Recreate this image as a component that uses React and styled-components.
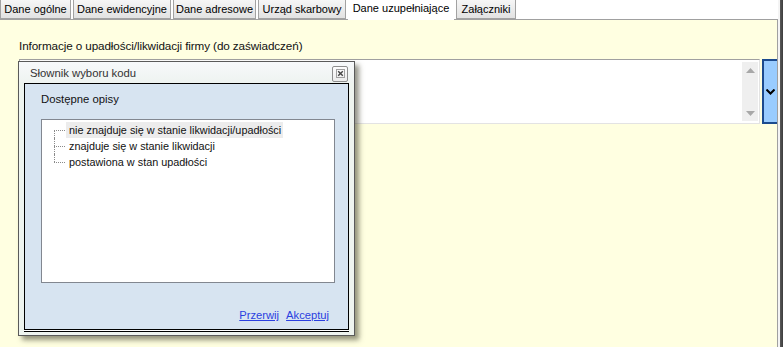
import React from "react"
import styled, { createGlobalStyle } from "styled-components"

const Global = createGlobalStyle`
  html, body {
    margin: 0;
    padding: 0;
    background: #f0f0f0;
  }
  body {
    font-family: "Liberation Sans", Arial, sans-serif;
    font-size: 11px;
    color: #000;
  }
`

const tabs = [
  { label: "Dane ogólne", w: 71 },
  { label: "Dane ewidencyjne", w: 98 },
  { label: "Dane adresowe", w: 83 },
  { label: "Urząd skarbowy", w: 88 },
  { label: "Dane uzupełniające", w: 106, active: true },
  { label: "Załączniki", w: 60 },
]

const options = [
  "nie znajduje się w stanie likwidacji/upadłości",
  "znajduje się w stanie likwidacji",
  "postawiona w stan upadłości",
]

export default function App() {
  return (
    <>
      <Global />
      <Window>
        <Main>
          <TabBar>
            {tabs.map((t) => (
              <Tab key={t.label} $w={t.w} $active={t.active}>
                {t.label}
              </Tab>
            ))}
          </TabBar>
          <Content>
            <FieldLabel>Informacje o upadłości/likwidacji firmy (do zaświadczeń)</FieldLabel>
            <FieldRow>
              <Memo>
                <MemoText />
                <ScrollBar>
                  <ScrollArrow>
                    <svg width="9" height="5" viewBox="0 0 9 5">
                      <path d="M0 5 L4.5 0 L9 5 Z" fill="#a8a8a8" />
                    </svg>
                  </ScrollArrow>
                  <ScrollArrow>
                    <svg width="9" height="5" viewBox="0 0 9 5">
                      <path d="M0 0 L9 0 L4.5 5 Z" fill="#a8a8a8" />
                    </svg>
                  </ScrollArrow>
                </ScrollBar>
              </Memo>
              <DropButton>
                <svg width="9" height="6" viewBox="0 0 9 6">
                  <path d="M0.5 0.5 L4.5 4.5 L8.5 0.5" stroke="#000" strokeWidth="2" fill="none" />
                </svg>
              </DropButton>
            </FieldRow>
          </Content>
        </Main>
        <RightEdge />

        <Dialog>
          <DialogTitle>
            <span>Słownik wyboru kodu</span>
            <CloseButton>
              <svg width="9" height="9" viewBox="0 0 9 9">
                <rect x="0.5" y="0.5" width="8" height="8" fill="none" stroke="#a0a0a0" />
                <path d="M2.2 2.2 L6.8 6.8 M6.8 2.2 L2.2 6.8" stroke="#444" strokeWidth="1.4" />
              </svg>
            </CloseButton>
          </DialogTitle>
          <DialogBody>
            <GroupLabel>Dostępne opisy</GroupLabel>
            <ListBox>
              <Tree>
                {options.map((o, i) => (
                  <TreeItem
                    key={o}
                    $first={i === 0}
                    $last={i === options.length - 1}
                  >
                    <ItemText $selected={i === 0}>{o}</ItemText>
                  </TreeItem>
                ))}
              </Tree>
            </ListBox>
            <Actions>
              <LinkButton>Przerwij</LinkButton>
              <LinkButton>Akceptuj</LinkButton>
            </Actions>
          </DialogBody>
        </Dialog>
      </Window>
    </>
  )
}

const Window = styled.div`
  position: relative;
  display: flex;
  width: 783px;
  height: 347px;
  overflow: hidden;
  background: #f0f0f0;
`

const Main = styled.div`
  display: flex;
  flex-direction: column;
  width: 778px;
  height: 100%;
  background: #fff;
`

const RightEdge = styled.div`
  width: 5px;
  height: 100%;
  background: linear-gradient(90deg, #f4f4f4 0, #f4f4f4 2px, #5a5a5a 2px, #3c3c3c 100%);
`

const TabBar = styled.div`
  display: flex;
  align-items: flex-start;
  gap: 2px;
  height: 19px;
  background: #fff;
`

const Tab = styled.div`
  box-sizing: border-box;
  width: ${(p) => p.$w}px;
  height: ${(p) => (p.$active ? 20 : 19)}px;
  display: flex;
  align-items: center;
  justify-content: center;
  padding-bottom: ${(p) => (p.$active ? 3 : 0)}px;
  font-size: 11px;
  color: #000;
  white-space: nowrap;
  position: relative;
  z-index: ${(p) => (p.$active ? 2 : 1)};
  background: ${(p) => (p.$active ? "#fff" : "linear-gradient(#f6f6f6, #e2e2e2)")};
  border: 1px solid ${(p) => (p.$active ? "transparent" : "#a2a2a2")};
  border-top: none;
`

const Content = styled.div`
  flex: 1;
  display: flex;
  flex-direction: column;
  background: #ffffe1;
  border-top: 1px solid #a0a0a0;
  border-right: 1px solid #a0a0a0;
  padding: 19px 0 0 19px;
`

const FieldLabel = styled.div`
  font-size: 11.7px;
  line-height: 13px;
  letter-spacing: -0.1px;
  color: #111;
  height: 20px;
`

const FieldRow = styled.div`
  display: flex;
  gap: 2px;
  height: 65px;
`

const Memo = styled.div`
  flex: 1;
  display: flex;
  box-sizing: border-box;
  background: #fff;
  border-top: 1px solid #a0a0a0;
  border-left: 1px solid #a0a0a0;
  border-bottom: 1px solid #e3e3e3;
  border-right: 1px solid #e3e3e3;
  padding: 2px 1px 2px 0;
`

const MemoText = styled.div`
  flex: 1;
`

const ScrollBar = styled.div`
  width: 16px;
  display: flex;
  flex-direction: column;
  justify-content: space-between;
  background: #efefef;
`

const ScrollArrow = styled.div`
  height: 16px;
  display: flex;
  align-items: center;
  justify-content: center;
`

const DropButton = styled.div`
  box-sizing: border-box;
  width: 15px;
  display: flex;
  align-items: center;
  justify-content: center;
  background: #99ccff;
  border: 2px solid #1b4a8e;
  border-right: none;
`

const Dialog = styled.div`
  position: absolute;
  left: 18px;
  top: 61px;
  width: 337px;
  height: 275px;
  box-sizing: border-box;
  display: flex;
  flex-direction: column;
  background: #eef4ef;
  border: 1px solid #5a5a5a;
  padding: 0 5px 5px 5px;
  box-shadow: 4px 4px 5px rgba(60, 60, 40, 0.55);
`

const DialogTitle = styled.div`
  height: 21px;
  display: flex;
  align-items: center;
  justify-content: space-between;
  font-size: 11.3px;
  color: #333;
  background: linear-gradient(#f7f9fb, #eef3f0);
  margin: 0 -5px;
  padding: 0 6px 0 11px;
`

const CloseButton = styled.div`
  box-sizing: border-box;
  width: 16px;
  height: 16px;
  margin-top: 2px;
  display: flex;
  align-items: center;
  justify-content: center;
  border: 1px solid #8e8e8e;
  border-radius: 2px;
  background: linear-gradient(#fdfdfd, #ececec);
`

const DialogBody = styled.div`
  flex: 1;
  display: flex;
  flex-direction: column;
  background: #d7e4f1;
  border: 1px solid #000;
  box-shadow: 0 1px 0 #fff, 0 2px 0 #000;
  padding: 9px 12px 8px 16px;
`

const GroupLabel = styled.div`
  font-size: 11.3px;
  color: #111;
  height: 26px;
`

const ListBox = styled.div`
  box-sizing: border-box;
  height: 164px;
  width: 294px;
  background: #fff;
  border: 1px solid #828790;
  padding: 2px 0 0 12px;
`

const Tree = styled.div`
  display: flex;
  flex-direction: column;
`

const TreeItem = styled.div`
  position: relative;
  height: 16px;
  display: flex;
  align-items: center;
  padding-left: 12px;

  &::before {
    content: "";
    position: absolute;
    left: 0;
    top: 8px;
    width: 11px;
    border-top: 1px dotted #8a8a8a;
  }

  &::after {
    content: "";
    position: absolute;
    left: 0;
    top: ${(p) => (p.$first ? 8 : 0)}px;
    height: ${(p) => (p.$first || p.$last ? 8 : 16)}px;
    border-left: 1px dotted #8a8a8a;
  }
`

const ItemText = styled.span`
  display: inline-block;
  height: 16px;
  line-height: 16px;
  padding: 0 2px 0 3px;
  font-size: 10.85px;
  color: #111;
  background: ${(p) => (p.$selected ? "#ececec" : "transparent")};
`

const Actions = styled.div`
  margin-top: auto;
  display: flex;
  justify-content: flex-end;
  gap: 7px;
  padding-right: 7px;
`

const LinkButton = styled.span`
  font-size: 11.2px;
  color: #2a3fe0;
  text-decoration: underline;
  cursor: pointer;
`
